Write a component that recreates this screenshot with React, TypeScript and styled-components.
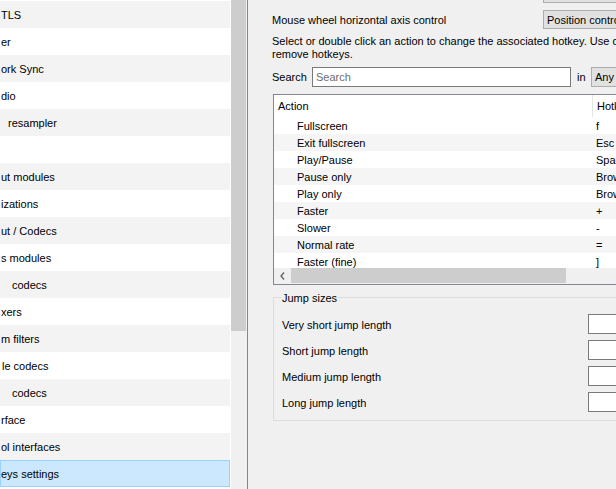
import React from "react";
import styled, { createGlobalStyle } from "styled-components";

const Global = createGlobalStyle`
  html, body { margin: 0; padding: 0; }
  body {
    font-family: "Liberation Sans", Arial, sans-serif;
    font-size: 11px;
    color: #000;
    background: #f0f0f0;
  }
  #root { width: 616px; height: 489px; overflow: hidden; }
`;

const Window = styled.div`
  display: flex;
  width: 616px;
  height: 489px;
  overflow: hidden;
  background: #f0f0f0;
`;

const Sidebar = styled.div`
  display: flex;
  flex: 0 0 248px;
  height: 100%;
  box-sizing: border-box;
  border-right: 1px solid #82878f;
  background: #f0f0f0;
`;

const TreeList = styled.div`
  flex: 0 0 231px;
  height: 100%;
  padding-top: 1px;
  box-sizing: border-box;
  background: #fff;
  overflow: hidden;
`;

const TreeItem = styled.div<{ $shaded: boolean; $selected: boolean; $indent: number }>`
  width: 230px;
  height: 27px;
  box-sizing: border-box;
  display: flex;
  align-items: center;
  padding-left: ${(p) => p.$indent}px;
  white-space: nowrap;
  overflow: hidden;
  background: ${(p) => (p.$selected ? "#cce8ff" : p.$shaded ? "#f3f3f3" : "#fff")};
  border: 1px solid ${(p) => (p.$selected ? "#99d1ff" : "transparent")};
`;

const VScroll = styled.div`
  flex: 0 0 15px;
  height: 100%;
  background: #f0f0f0;
`;

const VThumb = styled.div`
  height: 331px;
  background: #cdcdcd;
`;

const Content = styled.div`
  flex: 1;
  min-width: 0;
  display: flex;
  flex-direction: column;
  padding-left: 24px;
  overflow: hidden;
`;

const StubRow = styled.div`
  height: 3px;
  display: flex;
`;

const ButtonStub = styled.div`
  margin-left: 271px;
  flex: 0 0 130px;
  height: 3px;
  box-sizing: border-box;
  background: #e1e1e1;
  border: 1px solid #adadad;
  border-top: none;
`;

const ControlRow = styled.div`
  margin-top: 7px;
  height: 19px;
  display: flex;
  align-items: center;
  white-space: nowrap;
`;

const RowLabel = styled.div`
  flex: 0 0 271px;
`;

const Button = styled.div<{ $width: number }>`
  flex: 0 0 ${(p) => p.$width}px;
  height: 100%;
  box-sizing: border-box;
  background: #e1e1e1;
  border: 1px solid #adadad;
  padding-left: 3px;
  display: flex;
  align-items: center;
  white-space: nowrap;
  overflow: hidden;
`;

const Description = styled.div`
  margin-top: 6px;
  line-height: 13px;
  white-space: nowrap;
`;

const SearchRow = styled.div`
  margin-top: 6px;
  height: 20px;
  display: flex;
  align-items: center;
  white-space: nowrap;
`;

const SearchLabel = styled.div`
  flex: 0 0 40px;
`;

const SearchInput = styled.div`
  flex: 0 0 259px;
  height: 100%;
  box-sizing: border-box;
  background: #fff;
  border: 1px solid #7a7a7a;
  padding-left: 3px;
  display: flex;
  align-items: center;
  color: #6d6d6d;
`;

const InLabel = styled.div`
  flex: 0 0 20px;
  box-sizing: border-box;
  padding-left: 6px;
`;

const Table = styled.div`
  margin-top: 7px;
  margin-left: 1px;
  width: 420px;
  height: 191px;
  flex: 0 0 191px;
  box-sizing: border-box;
  border: 1px solid #82878f;
  background: #fff;
  display: flex;
  flex-direction: column;
`;

const HeaderRow = styled.div`
  height: 22px;
  flex: 0 0 22px;
  display: flex;
  align-items: stretch;
`;

const HeaderCell = styled.div<{ $width: number; $pad: number; $divider?: boolean }>`
  flex: 0 0 ${(p) => p.$width}px;
  box-sizing: border-box;
  padding-left: ${(p) => p.$pad}px;
  display: flex;
  align-items: center;
  border-right: ${(p) => (p.$divider ? "1px solid #e5e5e5" : "none")};
  white-space: nowrap;
`;

const TableBody = styled.div`
  flex: 0 0 151px;
  overflow: hidden;
`;

const TableRow = styled.div<{ $shaded: boolean }>`
  height: 17px;
  display: flex;
  align-items: center;
  background: ${(p) => (p.$shaded ? "#f5f5f5" : "#fff")};
  white-space: nowrap;
`;

const Cell = styled.div<{ $width: number; $pad: number }>`
  flex: 0 0 ${(p) => p.$width}px;
  box-sizing: border-box;
  padding-left: ${(p) => p.$pad}px;
`;

const HScroll = styled.div`
  flex: 0 0 16px;
  display: flex;
  background: #f0f0f0;
`;

const ArrowButton = styled.div`
  flex: 0 0 17px;
  height: 15px;
  display: flex;
  align-items: center;
  justify-content: center;
`;

const HThumb = styled.div`
  flex: 0 0 275px;
  height: 15px;
  background: #cdcdcd;
`;

const GroupBox = styled.div`
  position: relative;
  margin-top: 12px;
  margin-left: 1px;
  width: 420px;
  box-sizing: border-box;
  border: 1px solid #dcdcdc;
  padding: 13px 0 5px 0;
`;

const GroupTitle = styled.div`
  position: absolute;
  top: -6px;
  left: 7px;
  padding: 0 1px;
  line-height: 13px;
  background: #f0f0f0;
  white-space: nowrap;
`;

const FieldRow = styled.div`
  height: 26px;
  display: flex;
  align-items: center;
  white-space: nowrap;
`;

const FieldLabel = styled.div`
  flex: 0 0 314px;
  box-sizing: border-box;
  padding-left: 8px;
  padding-top: 2px;
`;

const FieldInput = styled.div`
  flex: 0 0 60px;
  height: 20px;
  box-sizing: border-box;
  background: #fff;
  border: 1px solid #7a7a7a;
`;

const treeItems: { text: string; indent: number }[] = [
  { text: "TLS", indent: 0 },
  { text: "er", indent: 0 },
  { text: "ork Sync", indent: 0 },
  { text: "dio", indent: 0 },
  { text: "resampler", indent: 7 },
  { text: "", indent: 0 },
  { text: "ut modules", indent: 0 },
  { text: "izations", indent: 0 },
  { text: "ut / Codecs", indent: 0 },
  { text: "s modules", indent: 0 },
  { text: "codecs", indent: 11 },
  { text: "xers", indent: 0 },
  { text: "m filters", indent: 0 },
  { text: "le codecs", indent: 1 },
  { text: "codecs", indent: 11 },
  { text: "rface", indent: 0 },
  { text: "ol interfaces", indent: 0 },
  { text: "eys settings", indent: 0 },
];

const hotkeys: [string, string][] = [
  ["Fullscreen", "f"],
  ["Exit fullscreen", "Esc"],
  ["Play/Pause", "Space"],
  ["Pause only", "Browser Pause"],
  ["Play only", "Browser Play"],
  ["Faster", "+"],
  ["Slower", "-"],
  ["Normal rate", "="],
  ["Faster (fine)", "]"],
];

const jumps = [
  "Very short jump length",
  "Short jump length",
  "Medium jump length",
  "Long jump length",
];

export default function App() {
  return (
    <>
      <Global />
      <Window>
        <Sidebar>
          <TreeList>
            {treeItems.map((it, i) => (
              <TreeItem key={i} $shaded={i % 2 === 0} $selected={i === 17} $indent={it.indent}>
                {it.text}
              </TreeItem>
            ))}
          </TreeList>
          <VScroll>
            <VThumb />
          </VScroll>
        </Sidebar>
        <Content>
          <StubRow>
            <ButtonStub />
          </StubRow>
          <ControlRow>
            <RowLabel>Mouse wheel horizontal axis control</RowLabel>
            <Button $width={130}>Position control</Button>
          </ControlRow>
          <Description>
            <div>Select or double click an action to change the associated hotkey. Use delete key to</div>
            <div>remove hotkeys.</div>
          </Description>
          <SearchRow>
            <SearchLabel>Search</SearchLabel>
            <SearchInput>Search</SearchInput>
            <InLabel>in</InLabel>
            <Button $width={60}>Any field</Button>
          </SearchRow>
          <Table>
            <HeaderRow>
              <HeaderCell $width={319} $pad={4} $divider>
                Action
              </HeaderCell>
              <HeaderCell $width={100} $pad={4}>
                Hotkey
              </HeaderCell>
            </HeaderRow>
            <TableBody>
              {hotkeys.map(([a, k], i) => (
                <TableRow key={a} $shaded={i % 2 === 1}>
                  <Cell $width={320} $pad={23}>
                    {a}
                  </Cell>
                  <Cell $width={100} $pad={2}>
                    {k}
                  </Cell>
                </TableRow>
              ))}
            </TableBody>
            <HScroll>
              <ArrowButton>
                <svg width="5" height="8" viewBox="0 0 5 8">
                  <path d="M4 0.5 L1 4 L4 7.5" fill="none" stroke="#606060" strokeWidth="1.3" />
                </svg>
              </ArrowButton>
              <HThumb />
            </HScroll>
          </Table>
          <GroupBox>
            <GroupTitle>Jump sizes</GroupTitle>
            {jumps.map((j) => (
              <FieldRow key={j}>
                <FieldLabel>{j}</FieldLabel>
                <FieldInput />
              </FieldRow>
            ))}
          </GroupBox>
        </Content>
      </Window>
    </>
  );
}
